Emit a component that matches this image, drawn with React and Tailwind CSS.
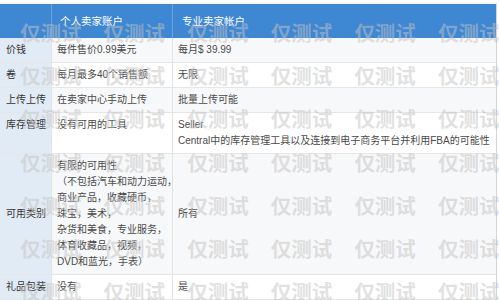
import React from "react";

const rows = [
  { label: "价钱", a: ["每件售价0.99美元"], b: ["每月$ 39.99"], shade: true },
  { label: "卷", a: ["每月最多40个销售额"], b: ["无限"], shade: false },
  { label: "上传上传", a: ["在卖家中心手动上传"], b: ["批量上传可能"], shade: true },
  {
    label: "库存管理",
    a: ["没有可用的工具"],
    b: ["Seller", "Central中的库存管理工具以及连接到电子商务平台并利用FBA的可能性"],
    shade: false,
  },
  {
    label: "可用类别",
    a: [
      "有限的可用性",
      "（不包括汽车和动力运动，",
      "商业产品，收藏硬币，",
      "珠宝，美术，",
      "杂货和美食，专业服务，",
      "体育收藏品，视频，",
      "DVD和蓝光，手表）",
    ],
    b: ["所有"],
    shade: true,
    center: true,
  },
  { label: "礼品包装", a: ["没有"], b: ["是"], shade: false },
];

const font = { fontFamily: '"Liberation Sans", "Noto Sans CJK SC", sans-serif' };

function Cell({ lines, className }) {
  return (
    <div className={className}>
      {lines.map((l, i) => (
        <div key={i} className="whitespace-nowrap">
          {l}
        </div>
      ))}
    </div>
  );
}

export default function App() {
  const wmRows = [0, 1, 2, 3, 4, 5, 6];
  const wmCols = [0, 1, 2, 3, 4, 5];
  return (
    <div
      className="relative w-[499px] h-[300px] overflow-hidden bg-white pt-[3px] text-[10px] leading-[16px] text-[#4a4a4a]"
      style={font}
    >
      <div className="w-[497px] border-r border-[#d5d5d5] border-t border-t-[#eef3f8]">
        <div className="grid grid-cols-[52px_121px_1fr] h-[34px] bg-[#3d87d3] text-white text-[10.5px]">
          <div className="border-r border-[#6aa3dc]"></div>
          <div className="flex items-center pl-[8px] border-r border-[#6aa3dc] whitespace-nowrap">个人卖家账户</div>
          <div className="flex items-center pl-[9px] whitespace-nowrap">专业卖家帐户</div>
        </div>
        {rows.map((r, i) => (
          <div
            key={i}
            className={
              "grid grid-cols-[52px_121px_1fr] border-b border-[#e6e6e6] " +
              (r.shade ? "bg-[#f7f8f9]" : "bg-white")
            }
          >
            <div
              className={
                "bg-[#e1ebf5] px-[6px] py-[4px] text-[#333] whitespace-nowrap border-r border-[#e3e3e3] flex " +
                (r.center ? "items-center" : "items-start")
              }
            >
              {r.label}
            </div>
            <Cell lines={r.a} className="px-[5px] py-[4px] border-r border-[#e3e3e3]" />
            <Cell
              lines={r.b}
              className={"px-[5px] py-[4px] flex flex-col " + (r.center ? "justify-center" : "")}
            />
          </div>
        ))}
      </div>
      <div className="pointer-events-none absolute inset-0 flex flex-col gap-[23.2px] pt-[22px] pl-[20px]">
        {wmRows.map((ri) => (
          <div key={ri} className="flex gap-[21.6px] h-[20px]">
            {wmCols.map((ci) => (
              <div
                key={ci}
                className="w-[62px] shrink-0 text-[20.5px] leading-[20px] font-bold whitespace-nowrap text-[rgba(195,195,195,0.5)]"
                style={{ fontFamily: '"Noto Sans CJK SC", sans-serif' }}
              >
                仅测试
              </div>
            ))}
          </div>
        ))}
      </div>
    </div>
  );
}
